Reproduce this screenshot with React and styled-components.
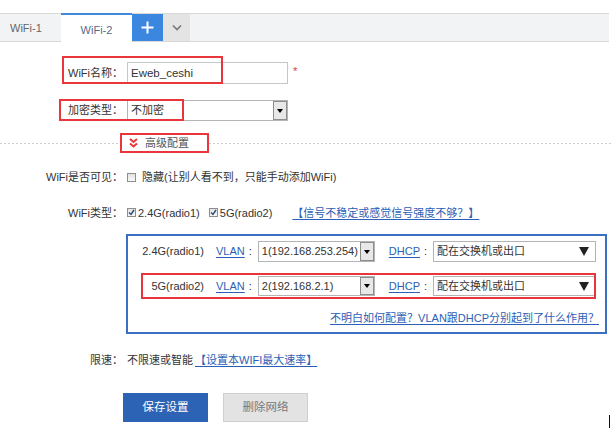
import React from "react";
import styled, { createGlobalStyle } from "styled-components";

const GlobalStyle = createGlobalStyle`
  html, body { margin: 0; padding: 0; background: #fff; }
  body {
    font-family: "Liberation Sans", "Noto Sans CJK SC", sans-serif;
    font-size: 11px;
    line-height: 1.3;
    color: #333;
  }
  * { box-sizing: border-box; }
`;

const Page = styled.div`
  position: relative;
  width: 614px;
  height: 432px;
  overflow: hidden;
  padding-top: 13px;
`;

const TabBar = styled.div`
  display: flex;
  width: 609px;
  height: 29px;
  background: #f2f3f5;
  border-top: 1px solid #d8d8d8;
  border-bottom: 1px solid #d8d8d8;
`;

const Tab = styled.div`
  width: ${(p) => p.$w}px;
  display: flex;
  align-items: center;
  justify-content: ${(p) => (p.$active ? "center" : "flex-start")};
  padding-left: ${(p) => (p.$active ? 0 : 10)}px;
  padding-top: ${(p) => (p.$active ? 3 : 0)}px;
  font-size: 11px;
  color: ${(p) => (p.$active ? "#5b6a88" : "#666")};
  background: ${(p) => (p.$active ? "#fff" : "transparent")};
  border-top: 2px solid ${(p) => (p.$active ? "#3d8ae0" : "transparent")};
  margin: -1px 0 -1px 0;
`;

const TabButton = styled.div`
  width: ${(p) => p.$w}px;
  display: flex;
  align-items: center;
  justify-content: center;
  background: ${(p) => p.$bg};
`;

const Form = styled.div`
  display: flex;
  flex-direction: column;
`;

const Row = styled.div`
  position: relative;
  display: grid;
  grid-template-columns: 123px auto;
  column-gap: 4px;
  justify-content: start;
  align-items: center;
  height: ${(p) => (p.$h ? `${p.$h}px` : "auto")};
  margin-top: ${(p) => p.$mt}px;
`;

const Label = styled.div`
  text-align: right;
  white-space: nowrap;
  color: #333;
`;

const Content = styled.div`
  display: flex;
  align-items: center;
  gap: ${(p) => p.$gap || 0}px;
  white-space: nowrap;
  height: 100%;
`;

const Annotation = styled.div`
  position: absolute;
  left: ${(p) => p.$l}px;
  top: ${(p) => p.$t}px;
  width: ${(p) => p.$w}px;
  height: ${(p) => p.$h}px;
  border: 2px solid #e8363c;
  pointer-events: none;
`;

const TextInput = styled.div`
  width: 161px;
  height: 22px;
  border: 1px solid #c6c6c6;
  padding-left: 3px;
  display: flex;
  align-items: center;
  font-size: 11.5px;
  color: #333;
`;

const Required = styled.span`
  color: #e8363c;
  margin-left: 5px;
  font-size: 11px;
  position: relative;
  top: -2px;
`;

const ClassicSelect = styled.div`
  width: ${(p) => p.$w}px;
  height: ${(p) => p.$h || 21}px;
  border: 1px solid #b4b4b4;
  display: flex;
  align-items: stretch;
  background: #fff;
`;

const SelectText = styled.div`
  flex: 1;
  display: flex;
  align-items: center;
  padding-left: 3px;
  color: #333;
  overflow: hidden;
`;

const ArrowBox = styled.div`
  width: 14px;
  border: 1px solid #8d8d8d;
  background: #e8e8e8;
  display: flex;
  align-items: center;
  justify-content: center;
  &::after {
    content: "";
    border-left: 3px solid transparent;
    border-right: 3px solid transparent;
    border-top: 4px solid #000;
  }
`;

const BigArrow = styled.div`
  width: 22px;
  display: flex;
  align-items: center;
  justify-content: center;
  &::after {
    content: "";
    border-left: 5px solid transparent;
    border-right: 5px solid transparent;
    border-top: 9px solid #222;
  }
`;

const Divider = styled.div`
  display: flex;
  align-items: center;
  height: 20px;
  margin-top: 12px;
  width: 612px;
`;

const DashLine = styled.div`
  flex: ${(p) => (p.$w ? `0 0 ${p.$w}px` : "1")};
  height: 1px;
  background-image: linear-gradient(to right, #cfcfcf 50%, transparent 50%);
  background-size: 4px 1px;
`;

const Toggle = styled.div`
  position: relative;
  width: 89px;
  height: 20px;
  display: flex;
  align-items: center;
  gap: 7px;
  padding-left: 9px;
  color: #555;
`;

const CheckBox = styled.span`
  width: 9px;
  height: 9px;
  border: 1px solid #8e8e8e;
  background: linear-gradient(#e2e2e2, #f8f8f8);
  display: inline-flex;
  align-items: center;
  justify-content: center;
  flex: 0 0 auto;
`;

const Link = styled.span`
  color: #2b5eb6;
  text-decoration: underline;
  text-underline-offset: 2px;
`;

const Item = styled.span`
  display: inline-flex;
  align-items: center;
  gap: ${(p) => p.$gap}px;
  margin-left: ${(p) => p.$ml || 0}px;
`;

const RadioBox = styled.div`
  margin-left: -1px;
  width: 481px;
  height: 100px;
  border: 2px solid #3a6fc2;
  padding: 5px 0 0 0;
  display: flex;
  flex-direction: column;
`;

const BoxRow = styled.div`
  position: relative;
  display: flex;
  align-items: center;
  height: ${(p) => p.$h}px;
  margin-top: ${(p) => p.$mt || 0}px;
`;

const RadioLabel = styled.div`
  width: 76px;
  text-align: right;
  color: #333;
`;

const Colon = styled.span`
  margin: 0 6px 0 4px;
  color: #333;
`;

const HelpRow = styled.div`
  display: flex;
  justify-content: flex-end;
  padding-right: 6px;
  margin-top: 15px;
  height: 14px;
  align-items: center;
`;

const ButtonRow = styled.div`
  display: flex;
  gap: 15px;
  padding-left: 123px;
  margin-top: 25px;
`;

const Button = styled.div`
  width: 85px;
  height: 29px;
  display: flex;
  align-items: center;
  justify-content: center;
  font-size: 11.5px;
  background: ${(p) => (p.$primary ? "#2c63b5" : "#e3e3e3")};
  color: ${(p) => (p.$primary ? "#fff" : "#777")};
  border: 1px solid ${(p) => (p.$primary ? "#2c63b5" : "#cfcfcf")};
`;

const Cursor = styled.div`
  position: absolute;
  left: 609px;
  top: 415px;
  width: 1px;
  height: 13px;
  background: #111;
`;

const Check = () => (
  <svg width="7" height="7" viewBox="0 0 7 7">
    <polyline points="1,3.5 3,5.5 6,1" fill="none" stroke="#2e4a78" strokeWidth="1.4" />
  </svg>
);

export default function App() {
  return (
    <Page>
      <GlobalStyle />
      <TabBar>
        <Tab $w={61}>WiFi-1</Tab>
        <Tab $w={71} $active>WiFi-2</Tab>
        <TabButton $w={31} $bg="#3b87e0">
          <svg width="13" height="13" viewBox="0 0 13 13">
            <path d="M6.5 0.5V12.5M0.5 6.5H12.5" stroke="#fff" strokeWidth="2" />
          </svg>
        </TabButton>
        <TabButton $w={27} $bg="#e4e4e4">
          <svg width="10" height="7" viewBox="0 0 10 7">
            <polyline points="1,1.5 5,5.5 9,1.5" fill="none" stroke="#777" strokeWidth="1.6" />
          </svg>
        </TabButton>
      </TabBar>

      <Form>
        <Row $h={22} $mt={20}>
          <Label>WiFi名称：</Label>
          <Content>
            <TextInput>Eweb_ceshi</TextInput>
            <Required>*</Required>
          </Content>
          <Annotation $l={62} $t={-6} $w={161} $h={28} />
        </Row>

        <Row $h={21} $mt={16}>
          <Label>加密类型：</Label>
          <Content>
            <ClassicSelect $w={161}>
              <SelectText>不加密</SelectText>
              <ArrowBox />
            </ClassicSelect>
          </Content>
          <Annotation $l={59} $t={-1} $w={125} $h={22} />
        </Row>

        <Divider>
          <DashLine $w={120} />
          <Toggle>
            <svg width="9" height="10" viewBox="0 0 9 10">
              <polyline points="1,1 4.5,4 8,1" fill="none" stroke="#e8363c" strokeWidth="2" />
              <polyline points="1,5.5 4.5,8.5 8,5.5" fill="none" stroke="#e8363c" strokeWidth="2" />
            </svg>
            <span>高级配置</span>
            <Annotation $l={0} $t={0} $w={89} $h={20} />
          </Toggle>
          <DashLine />
        </Divider>

        <Row $h={16} $mt={16}>
          <Label>WiFi是否可见：</Label>
          <Content $gap={6}>
            <CheckBox />
            <span>隐藏(让别人看不到，只能手动添加WiFi)</span>
          </Content>
        </Row>

        <Row $h={16} $mt={20}>
          <Label>WiFi类型：</Label>
          <Content>
            <Item $gap={2}>
              <CheckBox><Check /></CheckBox>
              <span>2.4G(radio1)</span>
            </Item>
            <Item $gap={2} $ml={9}>
              <CheckBox><Check /></CheckBox>
              <span>5G(radio2)</span>
            </Item>
            <Item $gap={0} $ml={20}>
              <Link>【信号不稳定或感觉信号强度不够？】</Link>
            </Item>
          </Content>
        </Row>

        <Row $mt={13}>
          <div />
          <RadioBox>
            <BoxRow $h={21}>
              <RadioLabel>2.4G(radio1)</RadioLabel>
              <Item $gap={0} $ml={12}>
                <Link>VLAN</Link>
                <Colon>:</Colon>
              </Item>
              <ClassicSelect $w={117}>
                <SelectText>1(192.168.253.254)</SelectText>
                <ArrowBox />
              </ClassicSelect>
              <Item $gap={0} $ml={14}>
                <Link>DHCP</Link>
                <Colon>:</Colon>
              </Item>
              <ClassicSelect $w={163}>
                <SelectText>配在交换机或出口</SelectText>
                <BigArrow />
              </ClassicSelect>
            </BoxRow>
            <BoxRow $h={20} $mt={14}>
              <RadioLabel>5G(radio2)</RadioLabel>
              <Item $gap={0} $ml={12}>
                <Link>VLAN</Link>
                <Colon>:</Colon>
              </Item>
              <ClassicSelect $w={117} $h={20}>
                <SelectText>2(192.168.2.1)</SelectText>
                <ArrowBox />
              </ClassicSelect>
              <Item $gap={0} $ml={14}>
                <Link>DHCP</Link>
                <Colon>:</Colon>
              </Item>
              <ClassicSelect $w={163} $h={20}>
                <SelectText>配在交换机或出口</SelectText>
                <BigArrow />
              </ClassicSelect>
              <Annotation $l={13} $t={-3} $w={455} $h={26} />
            </BoxRow>
            <HelpRow>
              <Link>不明白如何配置？VLAN跟DHCP分别起到了什么作用？</Link>
            </HelpRow>
          </RadioBox>
        </Row>

        <Row $h={16} $mt={18}>
          <Label>限速：</Label>
          <Content $gap={2}>
            <span>不限速或智能</span>
            <Link>【设置本WIFI最大速率】</Link>
          </Content>
        </Row>

        <ButtonRow>
          <Button $primary>保存设置</Button>
          <Button>删除网络</Button>
        </ButtonRow>
      </Form>
      <Cursor />
    </Page>
  );
}
